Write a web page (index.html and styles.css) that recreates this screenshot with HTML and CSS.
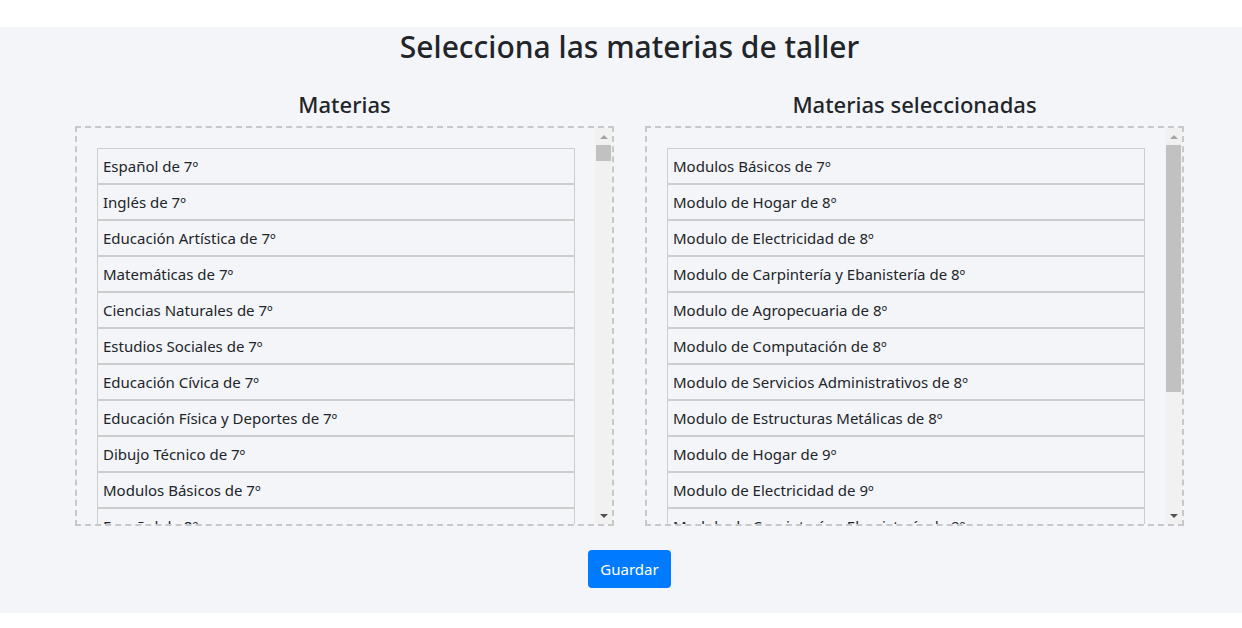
FILE: index.html
```html
<!DOCTYPE html>
<html lang="es">
<head>
  <meta charset="UTF-8">
  <title>Materias de taller</title>
  <link rel="stylesheet" href="styles.css">
</head>
<body>
  <div class="page">
    <div class="container">
      <h1 class="title">Selecciona las materias de taller</h1>

      <div class="columns">
        <!-- Lista de materias disponibles -->
        <div class="column">
          <h2 class="column-title">Materias</h2>
          <div class="drop-box">
            <div class="viewport">
              <ul class="subject-list">
                <li>Español de 7º</li>
                <li>Inglés de 7º</li>
                <li>Educación Artística de 7º</li>
                <li>Matemáticas de 7º</li>
                <li>Ciencias Naturales de 7º</li>
                <li>Estudios Sociales de 7º</li>
                <li>Educación Cívica de 7º</li>
                <li>Educación Física y Deportes de 7º</li>
                <li>Dibujo Técnico de 7º</li>
                <li>Modulos Básicos de 7º</li>
                <li>Español de 8º</li>
              </ul>
            </div>
            <div class="scrollbar">
              <div class="scroll-btn">
                <svg width="8" height="4" viewBox="0 0 8 4"><polygon points="0,4 4,0 8,4" fill="#a3a3a3"/></svg>
              </div>
              <div class="scroll-track">
                <div class="scroll-thumb" style="height: 16px"></div>
              </div>
              <div class="scroll-btn">
                <svg width="8" height="4" viewBox="0 0 8 4"><polygon points="0,0 8,0 4,4" fill="#505050"/></svg>
              </div>
            </div>
          </div>
        </div>

        <!-- Lista de materias seleccionadas -->
        <div class="column">
          <h2 class="column-title">Materias seleccionadas</h2>
          <div class="drop-box">
            <div class="viewport">
              <ul class="subject-list">
                <li>Modulos Básicos de 7º</li>
                <li>Modulo de Hogar de 8º</li>
                <li>Modulo de Electricidad de 8º</li>
                <li>Modulo de Carpintería y Ebanistería de 8º</li>
                <li>Modulo de Agropecuaria de 8º</li>
                <li>Modulo de Computación de 8º</li>
                <li>Modulo de Servicios Administrativos de 8º</li>
                <li>Modulo de Estructuras Metálicas de 8º</li>
                <li>Modulo de Hogar de 9º</li>
                <li>Modulo de Electricidad de 9º</li>
                <li>Modulo de Carpintería y Ebanistería de 9º</li>
              </ul>
            </div>
            <div class="scrollbar">
              <div class="scroll-btn">
                <svg width="8" height="4" viewBox="0 0 8 4"><polygon points="0,4 4,0 8,4" fill="#a3a3a3"/></svg>
              </div>
              <div class="scroll-track">
                <div class="scroll-thumb" style="height: 247px"></div>
              </div>
              <div class="scroll-btn">
                <svg width="8" height="4" viewBox="0 0 8 4"><polygon points="0,0 8,0 4,4" fill="#505050"/></svg>
              </div>
            </div>
          </div>
        </div>
      </div>

      <div class="actions">
        <button class="btn-save" type="button">Guardar</button>
      </div>
    </div>
  </div>
</body>
</html>
```

FILE: styles.css
```css
body {
  margin: 0;
  padding: 0;
  background: #fff;
  color: #212529;
  font-family: "Noto Sans", "Open Sans", sans-serif;
}

/* Franja gris con el contenido */
.page {
  margin-top: 27px;
  height: 586px;
  background: #f4f5f9;
}

.container {
  width: 1109px;
  margin-left: 75px;
}

.title {
  margin: 0;
  padding-top: 1px;
  font-size: 30px;
  font-weight: 500;
  line-height: 38px;
  text-align: center;
}

/* Dos columnas */
.columns {
  display: flex;
  gap: 31px;
  margin-top: 24px;
}

.column {
  flex: 1;
}

.column-title {
  margin: 0 0 7px 0;
  font-size: 22px;
  font-weight: 500;
  line-height: 29px;
  text-align: center;
}

/* Caja punteada con su barra de desplazamiento */
.drop-box {
  display: flex;
  height: 396px;
  border: 2px dashed #c8c8c8;
}

.viewport {
  flex: 1;
  overflow: hidden;
}

.scrollbar {
  display: flex;
  flex-direction: column;
  width: 17px;
  background: #f1f1f1;
}

.scroll-btn {
  display: flex;
  align-items: center;
  justify-content: center;
  height: 17px;
}

.scroll-track {
  flex: 1;
}

.scroll-thumb {
  margin: 0 1px;
  background: #c1c1c1;
}

.subject-list {
  list-style: none;
  margin: 0;
  padding: 20px;
}

.subject-list li {
  height: 34px;
  line-height: 34px;
  padding-left: 5px;
  border: 1px solid #cdcdcd;
  font-size: 15px;
  white-space: nowrap;
  overflow: hidden;
}

/* Botón guardar */
.actions {
  display: flex;
  justify-content: center;
  margin-top: 24px;
}

.btn-save {
  height: 38px;
  padding: 0 12px;
  border: none;
  border-radius: 4px;
  background: #007bff;
  color: #fff;
  font-family: inherit;
  font-size: 15px;
  cursor: pointer;
}
```
